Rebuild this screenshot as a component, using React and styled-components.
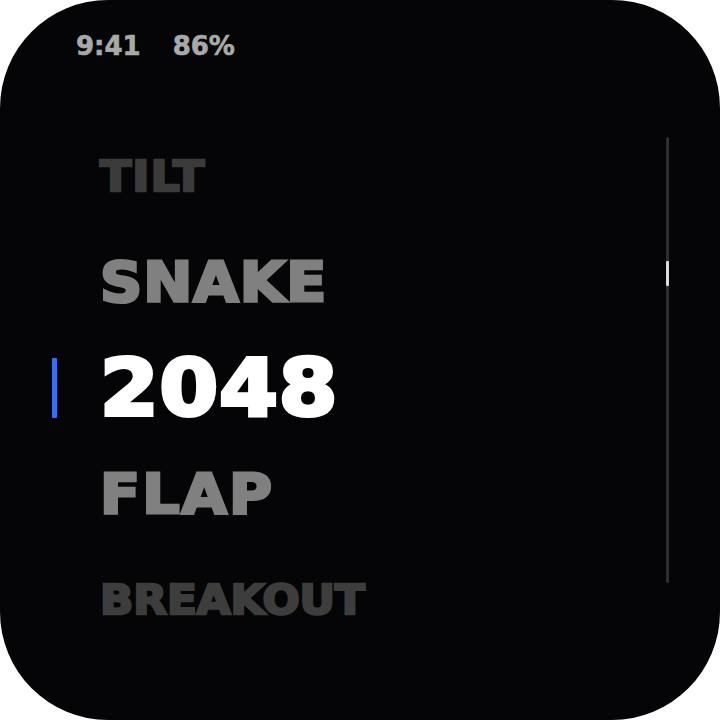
import React from 'react';
import styled, { createGlobalStyle } from 'styled-components';

const GlobalStyle = createGlobalStyle`
  html, body {
    margin: 0;
    padding: 0;
    background: #ffffff;
  }
`;

const Screen = styled.div`
  width: 720px;
  height: 720px;
  background: #050507;
  border-radius: 108px;
  overflow: hidden;
  display: flex;
  flex-direction: column;
  font-family: "DejaVu Sans", "Liberation Sans", sans-serif;
  font-weight: bold;
`;

const StatusBar = styled.div`
  display: flex;
  gap: 32px;
  padding: 33px 0 0 76px;
  height: 26px;
  font-size: 26px;
  line-height: 1;
  color: #a9a9a9;
  -webkit-text-stroke: 0.6px #a9a9a9;
`;

const Body = styled.div`
  flex: 1;
  display: flex;
  margin-top: 64px;
`;

const List = styled.ul`
  flex: 1;
  list-style: none;
  margin: 0;
  padding: 0;
  display: flex;
  flex-direction: column;
`;

const Row = styled.li`
  height: 106px;
  display: flex;
  align-items: center;
  padding-left: 52px;
  gap: 43px;
`;

const Indicator = styled.span`
  width: 5px;
  height: 60px;
  border-radius: 1px;
  background: ${p => (p.$active ? '#3a6ff0' : 'transparent')};
`;

/* the source face is an extended grotesk; widen the bold face a little */
const Title = styled.span`
  font-size: ${p => p.$size}px;
  line-height: 1;
  color: ${p => p.$color};
  -webkit-text-stroke: ${p => p.$stroke}px ${p => p.$color};
  letter-spacing: ${p => p.$spacing || 0}px;
  white-space: nowrap;
  transform: scaleX(1.065);
  transform-origin: left center;
`;

const Track = styled.div`
  position: relative;
  width: 3px;
  height: 446px;
  margin: 14px 51px 0 0;
  background: #2e2e30;
  border-radius: 2px;
`;

const Thumb = styled.div`
  position: absolute;
  left: 0;
  top: 124px;
  width: 3px;
  height: 25px;
  background: #dcdcdc;
  border-radius: 1px;
`;

const games = [
  { name: 'TILT', size: 43, color: '#3b3b3b', spacing: 1, stroke: 2.5 },
  { name: 'SNAKE', size: 55, color: '#808080', spacing: 1, stroke: 3 },
  { name: '2048', size: 79, color: '#ffffff', spacing: 1, stroke: 4, active: true },
  { name: 'FLAP', size: 55, color: '#808080', spacing: 2, stroke: 3 },
  { name: 'BREAKOUT', size: 41, color: '#3d3d3d', spacing: 0, stroke: 2.5 },
];

export default function App() {
  return (
    <>
      <GlobalStyle />
      <Screen>
        <StatusBar>
          <span>9:41</span>
          <span>86%</span>
        </StatusBar>
        <Body>
          <List>
            {games.map(g => (
              <Row key={g.name}>
                <Indicator $active={g.active} />
                <Title
                  $size={g.size}
                  $color={g.color}
                  $spacing={g.spacing}
                  $stroke={g.stroke}
                >
                  {g.name}
                </Title>
              </Row>
            ))}
          </List>
          <Track>
            <Thumb />
          </Track>
        </Body>
      </Screen>
    </>
  );
}
